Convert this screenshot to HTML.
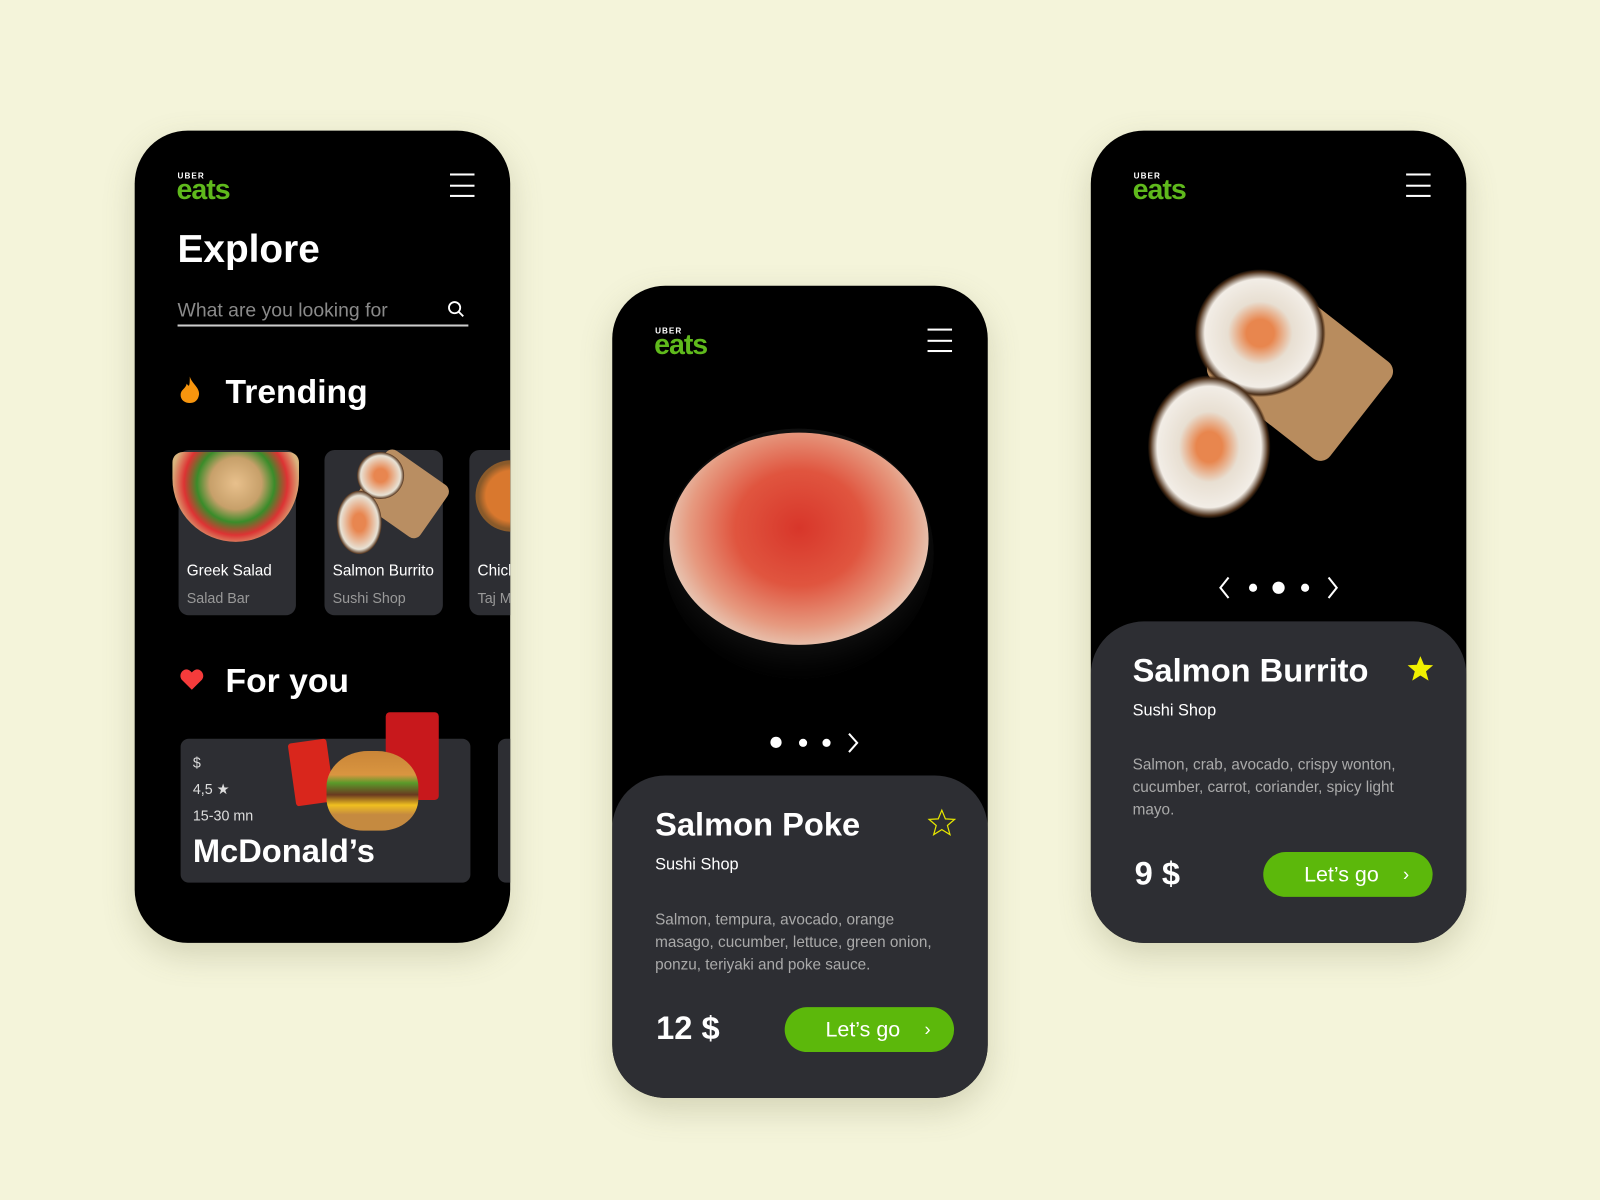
<!DOCTYPE html><html><head><meta charset="utf-8"><style>
*{margin:0;padding:0;box-sizing:border-box}
body{width:1600px;height:1200px;overflow:hidden;background:#f4f4da;font-family:"Liberation Sans",sans-serif}
#s{width:1568px;height:1176px;position:relative;transform:scale(1.0204);transform-origin:0 0}
.ph{position:absolute;width:368px;height:796px;background:#000;border-radius:52px;overflow:hidden;box-shadow:0 12px 30px rgba(120,120,80,.25)}
.a{position:absolute;white-space:nowrap}
.logo .u{position:absolute;left:1px;top:0;font-size:8px;font-weight:bold;color:#fff;letter-spacing:1px}
.logo .e{position:absolute;left:0;top:2px;font-size:28px;font-weight:bold;color:#5fb91c;letter-spacing:-1px}
.hb{position:absolute;width:24px;height:23px;border-top:2px solid #fff;border-bottom:2px solid #fff}
.hb:after{content:"";position:absolute;left:0;right:0;top:9px;height:2px;background:#fff}
.card{position:absolute;background:#2d2e33}
.btn{position:absolute;width:166px;height:44px;border-radius:22px;background:#5cb80b;color:#fff;font-size:21px}
</style></head><body><div id="s">
<!-- phone 1 -->
<div class="ph" style="left:132px;top:128px">
 <div class="logo a" style="left:41px;top:40px"><span class="u">UBER</span><span class="e">eats</span></div>
 <div class="hb" style="left:309px;top:42px"></div>
 <div class="a" style="left:42px;top:96px;font-size:38px;font-weight:bold;color:#fff">Explore</div>
 <div class="a" style="left:42px;top:166px;font-size:19px;color:#8a8a8a">What are you looking for</div>
 <svg class="a" style="left:306px;top:166px" width="18" height="18"><circle cx="7.5" cy="7.5" r="5.5" fill="none" stroke="#fff" stroke-width="1.8"/><path d="M11.5 11.5L16 16" stroke="#fff" stroke-width="1.8"/></svg>
 <div class="a" style="left:42px;top:190px;width:285px;height:2px;background:#ccc"></div>
 <svg class="a" style="left:43px;top:240px" width="22" height="28"><path d="M11 1C13 8 21 12 20 19C19 25 15 27 11 27C6 27 2 24 2 19C2 14 7 13 8 8C10 11 11 12 11 1Z" fill="#f7950e"/></svg>
 <div class="a" style="left:89px;top:237px;font-size:33px;font-weight:bold;color:#fff">Trending</div>
 <div class="card" style="left:43px;top:313px;width:115px;height:162px;border-radius:10px">
  <div class="a" style="left:-6px;top:2px;width:124px;height:88px;border-radius:10px 10px 62px 62px;background:radial-gradient(circle at 50% 35%,#e8c08c 0,#c7a06a 30%,#3a8c2a 45%,#d33 60%,#d9b47e 75%)"></div>
  <div class="a" style="left:8px;top:110px;font-size:15px;color:#fff">Greek Salad</div>
  <div class="a" style="left:8px;top:137px;font-size:14px;color:#999">Salad Bar</div></div>
 <div class="card" style="left:186px;top:313px;width:116px;height:162px;border-radius:10px">
  <div class="a" style="left:40px;top:12px;width:74px;height:62px;background:#b98e62;transform:rotate(35deg);border-radius:8px"></div>
  <div class="a" style="left:32px;top:2px;width:46px;height:46px;border-radius:50%;background:radial-gradient(#e88650 20%,#e8e2d5 60%,#5a3a22 70%)"></div>
  <div class="a" style="left:12px;top:40px;width:44px;height:62px;border-radius:50%;background:radial-gradient(#e88650 20%,#e8e2d5 60%,#5a3a22 70%)"></div>
  <div class="a" style="left:8px;top:110px;font-size:15px;color:#fff">Salmon Burrito</div>
  <div class="a" style="left:8px;top:137px;font-size:14px;color:#999">Sushi Shop</div></div>
 <div class="card" style="left:328px;top:313px;width:80px;height:162px;border-radius:10px">
  <div class="a" style="left:6px;top:10px;width:70px;height:70px;border-radius:50%;background:radial-gradient(#d9782e 50%,#8a5a2a 65%)"></div>
  <div class="a" style="left:8px;top:110px;font-size:15px;color:#fff">Chicken</div>
  <div class="a" style="left:8px;top:137px;font-size:14px;color:#999">Taj Mahal</div></div>
 <svg class="a" style="left:44px;top:527px" width="24" height="22"><path d="M12 21L2 11C-1 7 2 1 7 1C9 1 11 3 12 4C13 3 15 1 17 1C22 1 25 7 22 11Z" fill="#f53b3b"/></svg>
 <div class="a" style="left:89px;top:520px;font-size:33px;font-weight:bold;color:#fff">For you</div>
 <div class="card" style="left:45px;top:596px;width:284px;height:141px;border-radius:8px">
  <div class="a" style="left:12px;top:15px;font-size:14px;color:#ddd">$</div>
  <div class="a" style="left:12px;top:41px;font-size:14px;color:#ddd">4,5 ★</div>
  <div class="a" style="left:12px;top:67px;font-size:14px;color:#ddd">15-30 mn</div>
  <div class="a" style="left:12px;top:92px;font-size:32px;font-weight:bold;color:#fff">McDonald’s</div>
 </div>
 <div class="a" style="left:154px;top:598px;width:38px;height:62px;background:#d9261c;border-radius:3px;transform:rotate(-8deg)"></div>
 <div class="a" style="left:246px;top:570px;width:52px;height:86px;background:#c8181c;border-radius:4px"></div>
 <div class="a" style="left:188px;top:608px;width:90px;height:78px;border-radius:45% 45% 40% 40%;background:linear-gradient(#c98538 0,#d99540 30%,#5a9a2a 40%,#6a3a20 55%,#f0c020 68%,#c58a40 80%)"></div>
 <div class="card" style="left:356px;top:596px;width:30px;height:141px;border-radius:8px"></div>
</div>
<!-- phone 2 -->
<div class="ph" style="left:600px;top:280px">
 <div class="logo a" style="left:41px;top:40px"><span class="u">UBER</span><span class="e">eats</span></div>
 <div class="hb" style="left:309px;top:42px"></div>
 <div class="a" style="left:50px;top:140px;width:265px;height:245px;border-radius:50%;background:#111;box-shadow:inset 0 -20px 30px #000"></div>
 <div class="a" style="left:56px;top:144px;width:254px;height:208px;border-radius:50%;background:radial-gradient(ellipse at 50% 45%,#d8362a 0,#e0553f 35%,#e69a80 60%,#e8dccd 80%,#3a3a3a 95%)"></div>
 <div class="a" style="left:155px;top:442px;width:11px;height:11px;border-radius:50%;background:#fff"></div>
 <div class="a" style="left:183px;top:444px;width:8px;height:8px;border-radius:50%;background:#fff"></div>
 <div class="a" style="left:206px;top:444px;width:8px;height:8px;border-radius:50%;background:#fff"></div>
 <svg class="a" style="left:229px;top:437px" width="14" height="22"><path d="M3 2L11 11L3 20" fill="none" stroke="#fff" stroke-width="2"/></svg>
 <div class="card" style="left:0;top:480px;width:368px;height:316px;border-radius:52px 52px 0 0">
  <div class="a" style="left:42px;top:30px;font-size:32px;font-weight:bold;color:#fff">Salmon Poke</div>
  <svg class="a" style="left:308px;top:32px" width="30" height="28"><path d="M15 2L18.5 10.5L27.5 11L20.5 17L23 26L15 21L7 26L9.5 17L2.5 11L11.5 10.5Z" fill="none" stroke="#e6e600" stroke-width="1.2"/></svg>
  <div class="a" style="left:42px;top:79px;font-size:16px;color:#fff">Sushi Shop</div>
  <div class="a" style="left:42px;top:131px;font-size:15px;line-height:22px;color:#aaa">Salmon, tempura, avocado, orange<br>masago, cucumber, lettuce, green onion,<br>ponzu, teriyaki and poke sauce.</div>
  <div class="a" style="left:43px;top:229px;font-size:32px;font-weight:bold;color:#fff">12 $</div>
  <div class="btn" style="left:169px;top:227px"><span class="a" style="left:40px;top:11px">Let’s go</span><span class="a" style="left:137px;top:12px;font-size:18px">›</span></div>
 </div>
</div>
<!-- phone 3 -->
<div class="ph" style="left:1069px;top:128px">
 <div class="logo a" style="left:41px;top:40px"><span class="u">UBER</span><span class="e">eats</span></div>
 <div class="hb" style="left:309px;top:42px"></div>
 <div class="a" style="left:130px;top:175px;width:150px;height:120px;background:#b88c5e;transform:rotate(38deg);border-radius:12px"></div>
 <div class="a" style="left:102px;top:136px;width:128px;height:125px;border-radius:50%;background:radial-gradient(#e8864e 15%,#e8dfd2 35%,#f2ede6 60%,#4a2e18 68%,transparent 71%)"></div>
 <div class="a" style="left:56px;top:240px;width:120px;height:140px;border-radius:50%;background:radial-gradient(#e8864e 15%,#e8dfd2 35%,#f2ede6 60%,#4a2e18 68%,transparent 71%)"></div>
 <svg class="a" style="left:123px;top:436px" width="16" height="24"><path d="M12 2L4 12L12 22" fill="none" stroke="#fff" stroke-width="2"/></svg>
 <div class="a" style="left:155px;top:444px;width:8px;height:8px;border-radius:50%;background:#fff"></div>
 <div class="a" style="left:178px;top:442px;width:12px;height:12px;border-radius:50%;background:#fff"></div>
 <div class="a" style="left:206px;top:444px;width:8px;height:8px;border-radius:50%;background:#fff"></div>
 <svg class="a" style="left:229px;top:436px" width="16" height="24"><path d="M4 2L12 12L4 22" fill="none" stroke="#fff" stroke-width="2"/></svg>
 <div class="card" style="left:0;top:481px;width:368px;height:316px;border-radius:52px 52px 0 0">
  <div class="a" style="left:41px;top:30px;font-size:32px;font-weight:bold;color:#fff">Salmon Burrito</div>
  <svg class="a" style="left:308px;top:32px" width="30" height="28"><path d="M15 2L18.5 10.5L27.5 11L20.5 17L23 26L15 21L7 26L9.5 17L2.5 11L11.5 10.5Z" fill="#f0f000"/></svg>
  <div class="a" style="left:41px;top:79px;font-size:16px;color:#fff">Sushi Shop</div>
  <div class="a" style="left:41px;top:130px;font-size:15px;line-height:22px;color:#aaa">Salmon, crab, avocado, crispy wonton,<br>cucumber, carrot, coriander, spicy light<br>mayo.</div>
  <div class="a" style="left:43px;top:229px;font-size:32px;font-weight:bold;color:#fff">9 $</div>
  <div class="btn" style="left:169px;top:226px"><span class="a" style="left:40px;top:11px">Let’s go</span><span class="a" style="left:137px;top:12px;font-size:18px">›</span></div>
 </div>
</div>
</div></body></html>
